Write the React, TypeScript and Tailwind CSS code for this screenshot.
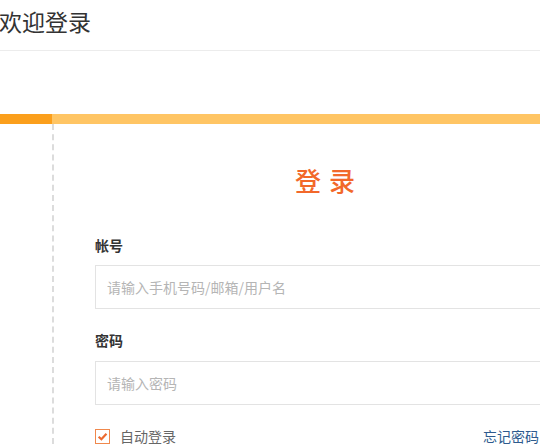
import { useState } from "react";

const font = { fontFamily: '"Noto Sans CJK SC", "Noto Sans", sans-serif' };

export default function App() {
  const [remember, setRemember] = useState(true);

  return (
    <div
      className="w-[540px] h-[448px] overflow-hidden bg-white text-[#333]"
      style={font}
    >
      <div className="h-[51px] border-b border-[#ececec] pt-[6px]">
        <h1 className="-ml-[1px] text-[23px] leading-[30px] text-[#333] font-normal">
          欢迎登录
        </h1>
      </div>

      <div className="mt-[63px] w-[640px] flex h-[10px]">
        <div className="w-[52px] bg-[#fb9f1c]" />
        <div className="flex-1 bg-[#ffc564]" />
      </div>

      <div className="flex">
        <div className="w-[52px] shrink-0" />
        <div className="w-[546px] shrink-0 h-[330px] border-l-2 border-dashed border-[#dcdcdc] pl-[41px] pr-[43px]">
          <h2 className="mt-[40px] text-center text-[26px] leading-[32px] font-medium text-[#f2682a] tracking-[8px] -mr-[8px]">
            登录
          </h2>

          <label className="block mt-[39px] text-[14px] leading-[20px] font-bold text-[#333]">
            帐号
          </label>
          <input
            className="mt-[10px] block w-full h-[44px] border border-[#e3e3e3] px-[11px] text-[14px] outline-none placeholder:text-[#b5b5b5]"
            placeholder="请输入手机号码/邮箱/用户名"
            style={font}
          />

          <label className="block mt-[21px] text-[14px] leading-[20px] font-bold text-[#333]">
            密码
          </label>
          <input
            type="password"
            className="mt-[11px] block w-full h-[44px] border border-[#e3e3e3] px-[11px] text-[14px] outline-none placeholder:text-[#b5b5b5]"
            placeholder="请输入密码"
            style={font}
          />

          <div className="mt-[21px] flex items-center h-[20px]">
            <button
              type="button"
              onClick={() => setRemember(!remember)}
              className="w-[15px] h-[15px] border border-[#f0884c] bg-white flex items-center justify-center"
            >
              {remember && (
                <svg width="11" height="11" viewBox="0 0 10 10">
                  <path
                    d="M1.5 5.2 L4 7.5 L8.6 2.6"
                    fill="none"
                    stroke="#ec6a30"
                    strokeWidth="2"
                  />
                </svg>
              )}
            </button>
            <span className="ml-[10px] text-[14px] text-[#666]">自动登录</span>
            <a className="ml-auto mr-[16px] text-[14px] text-[#2e5b8e]" href="#">
              忘记密码
            </a>
          </div>
        </div>
      </div>
    </div>
  );
}
